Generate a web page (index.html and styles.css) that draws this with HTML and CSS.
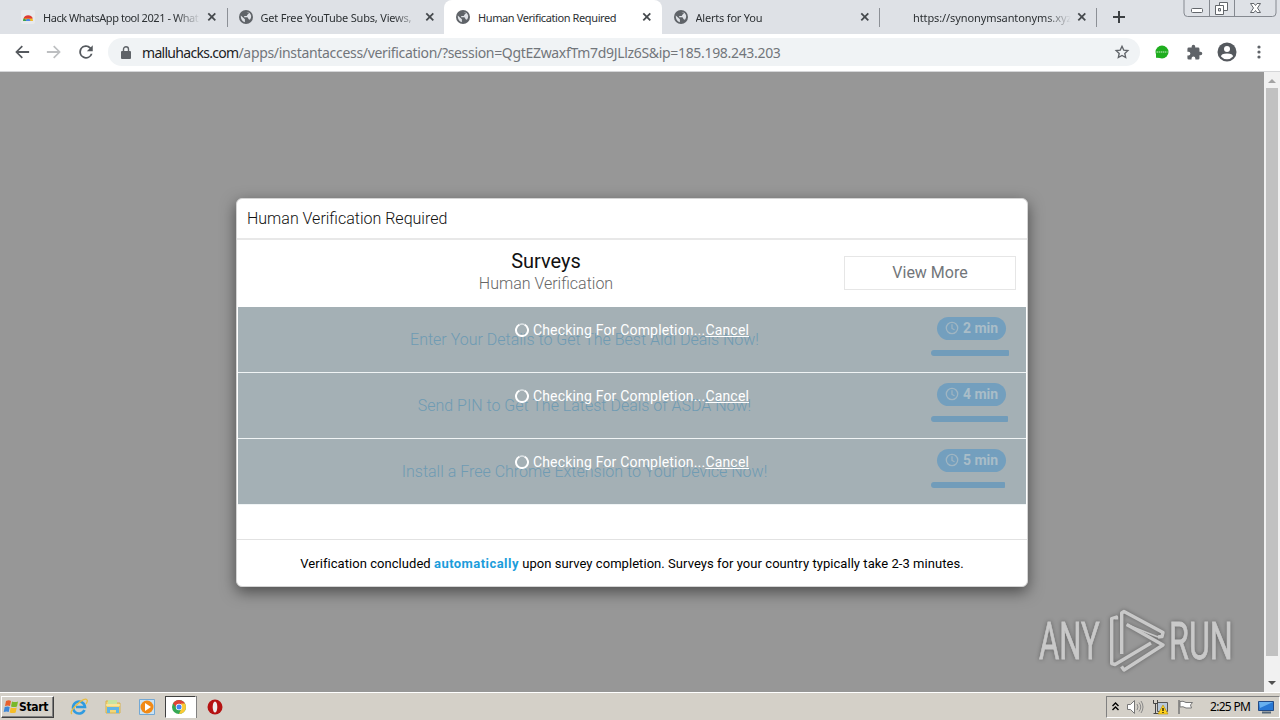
FILE: index.html
```html
<!DOCTYPE html>
<html lang="en">
<head>
    <meta charset="UTF-8">
    <meta name="viewport" content="width=device-width, initial-scale=1.0">
    <title>Human Verification Required</title>
    <link rel="stylesheet" href="styles.css">
</head>
<body>
    <svg class="defs" width="0" height="0">
        <symbol id="globe" viewBox="0 0 14 14">
            <circle cx="7" cy="7" r="7" fill="#5f6368"/>
            <path d="M1.8 5.6l3 2.6 1.1 1.1v2.9c-2.4-.5-4.3-2.9-4.1-6.6zM6 2.1c2 0 3.2.1 4.1.9L8.6 4.6 7.7 6H5.2v1.3h3.3l1.2 1.9 1.2.5c1-1 1.4-2.6 1.2-4.2-.6-1.8-1.7-3-3.2-3.6z" fill="#dee1e6"/>
        </symbol>
        <symbol id="close" viewBox="0 0 10 10">
            <path d="M1.300 1.300l7 7M8.300 1.300l-7 7" stroke="#45494d" stroke-width="1.800" fill="none"/>
        </symbol>
        <symbol id="clock" viewBox="0 0 14 14">
            <circle cx="7" cy="7" r="5.700" fill="none" stroke="#9fb5c2" stroke-width="1.300"/>
            <path d="M7 3.300V7.500l2.500 1.300" fill="none" stroke="#9fb5c2" stroke-width="1.200"/>
        </symbol>
        <symbol id="spinner" viewBox="0 0 14 14">
            <path d="M4.500 1.600A6 6 0 1 0 9.500 1.600" fill="none" stroke="#fff" stroke-width="2"/>
            <path d="M4.500 1.600A6 6 0 0 1 9.500 1.600" fill="none" stroke="#dbe1e4" stroke-width="1.500"/>
        </symbol>
    </svg>

    <div class="tab-strip">
        <div class="tab">
            <svg class="favicon" viewBox="0 0 14 14">
                <rect width="14" height="14" rx="2" fill="#e8e9ec"/>
                <path d="M2 11a5 5 0 0 1 10 0z" fill="#f2bc25"/>
                <path d="M2 11a5 5 0 0 1 1-3l3 3z" fill="#35a34f"/>
                <path d="M2.500 8.500a5 5 0 0 1 9.300 0z" fill="#df3b32"/>
                <path d="M4.800 11a2.300 2.300 0 0 1 4.600 0z" fill="#4a83e8"/>
            </svg>
            <span class="tab-title t1">Hack WhatsApp tool 2021 - What</span>
            <svg class="tab-close"><use href="#close"/></svg>
        </div>
        <div class="tab divided">
            <svg class="favicon"><use href="#globe"/></svg>
            <span class="tab-title">Get Free YouTube Subs, Views,</span>
            <svg class="tab-close"><use href="#close"/></svg>
        </div>
        <div class="tab active">
            <svg class="favicon"><use href="#globe"/></svg>
            <span class="tab-title t3">Human Verification Required</span>
            <svg class="tab-close"><use href="#close"/></svg>
        </div>
        <div class="tab">
            <svg class="favicon"><use href="#globe"/></svg>
            <span class="tab-title">Alerts for You</span>
            <svg class="tab-close"><use href="#close"/></svg>
        </div>
        <div class="tab divided last">
            <span class="favicon"></span>
            <span class="tab-title t5">https://synonymsantonyms.xyz</span>
            <svg class="tab-close"><use href="#close"/></svg>
        </div>
        <svg class="new-tab" viewBox="0 0 12 12"><path d="M6 0v12M0 6h12" stroke="#3c4043" stroke-width="2"/></svg>
        <svg class="window-buttons" viewBox="0 0 94 17">
            <path d="M1 0v13q0 3.500 3.500 3.500h85q3.500 0 3.500-3.500V0M26.500 0v16M51.500 0v16" fill="none" stroke="#858990"/>
            <rect x="8.500" y="8.500" width="11" height="4" rx="1" fill="#fff" stroke="#63676c"/>
            <path d="M36.500 2.500h8v8h-8z" fill="#fff" stroke="#63676c"/>
            <path d="M32.500 5.500h8v9h-8z" fill="#fff" stroke="#63676c"/>
            <path d="M35.500 8.500h2v2.500h-2z" fill="#dee1e6" stroke="#63676c"/>
            <path d="M67.500 3.500h3.500l1.500 2 1.500-2h3.500l-3 4.500 3 4.500H74l-1.500-2-1.500 2h-3.500l3-4.500z" fill="#fff" stroke="#63676c"/>
        </svg>
    </div>

    <div class="toolbar">
        <svg class="nav-icon" viewBox="0 0 24 24"><path d="M21.500 10.800H7.300l5.900-5.900L11.600 3.300 3 12l8.600 8.700 1.600-1.600-5.900-5.900h14.200z" fill="#55595e"/></svg>
        <svg class="nav-icon" viewBox="0 0 24 24"><path d="M2.500 10.800h14.200l-5.900-5.900 1.600-1.600L21 12l-8.600 8.700-1.600-1.600 5.900-5.900H2.500z" fill="#bdbfc1"/></svg>
        <svg class="nav-icon" viewBox="0 0 24 24"><path d="M18.400 5.600A9 9 0 1 0 20.700 14.300h-2.500A6.600 6.600 0 1 1 12 5.400c1.800 0 3.500.8 4.700 2L13.100 11H21V3z" fill="#55595e"/></svg>
        <div class="address-bar">
            <svg class="lock" viewBox="0 0 10 13"><path d="M1 5h8q1 0 1 1v6q0 1-1 1H1q-1 0-1-1V6q0-1 1-1z" fill="#5f6368"/><path d="M2.500 6V3.200a2.500 2.500 0 0 1 5 0V6" fill="none" stroke="#5f6368" stroke-width="1.400"/></svg>
            <span class="url"><span class="host">malluhacks.com</span><span class="path">/apps/instantaccess/verification/?session=QgtEZwaxfTm7d9JLlz6S&amp;ip=185.198.243.203</span></span>
            <svg class="star" viewBox="0 0 24 24"><path d="M12 3.500l2.600 5.700 6.200.7-4.600 4.200 1.300 6.200L12 17.200l-5.500 3.100 1.300-6.200-4.600-4.200 6.200-.7z" fill="none" stroke="#5f6368" stroke-width="2"/></svg>
        </div>
        <div class="extensions">
            <svg width="14" height="14" viewBox="0 0 14 14"><circle cx="7" cy="7" r="6.500" fill="#1fae1f"/><path d="M1 12.800V8l5 5z" fill="#1fae1f"/><path d="M1.500 7h11" stroke="#8fd88f" stroke-width="1.500" stroke-dasharray="1.500 .6"/></svg>
            <svg class="puzzle" width="17" height="17" viewBox="0 0 24 24"><path d="M20.500 11H19V7a2 2 0 0 0-2-2h-4V3.500a2.500 2.500 0 0 0-5 0V5H4a2 2 0 0 0-2 2v3.800h1.500a2.700 2.700 0 0 1 0 5.400H2V20a2 2 0 0 0 2 2h3.800v-1.500a2.700 2.700 0 0 1 5.400 0V22H17a2 2 0 0 0 2-2v-4h1.500a2.500 2.500 0 0 0 0-5z" fill="#5f6368"/></svg>
            <svg class="avatar" width="20" height="20" viewBox="0 0 20 20"><circle cx="10" cy="10" r="9.500" fill="#55595e"/><circle cx="10" cy="7" r="3" fill="#fff"/><path d="M4 14.500q0-3 6-3t6 3q-2.300 2.700-6 2.700t-6-2.700z" fill="#fff"/></svg>
            <svg width="4" height="14" viewBox="0 0 4 14" fill="#5f6368"><circle cx="2" cy="2" r="1.600"/><circle cx="2" cy="7" r="1.600"/><circle cx="2" cy="12" r="1.600"/></svg>
        </div>
    </div>

    <div class="viewport">
        <div class="page">
            <div class="modal">
                <div class="modal-title"><span>Human Verification Required</span></div>
                <div class="modal-head">
                    <div class="head-text">
                        <h1>Surveys</h1>
                        <p>Human Verification</p>
                    </div>
                    <button class="view-more">View More</button>
                </div>
                <div class="offer">
                    <div class="offer-name">Enter Your Details to Get The Best Aldi Deals Now!</div>
                    <div class="offer-side">
                        <div class="time"><svg><use href="#clock"/></svg>2 min</div>
                        <div class="bar" style="width: 78px"></div>
                    </div>
                    <div class="checking"><svg><use href="#spinner"/></svg><span>Checking For Completion...<a>Cancel</a></span></div>
                </div>
                <div class="offer">
                    <div class="offer-name">Send PIN to Get The Latest Deals of ASDA Now!</div>
                    <div class="offer-side">
                        <div class="time"><svg><use href="#clock"/></svg>4 min</div>
                        <div class="bar" style="width: 77px"></div>
                    </div>
                    <div class="checking"><svg><use href="#spinner"/></svg><span>Checking For Completion...<a>Cancel</a></span></div>
                </div>
                <div class="offer">
                    <div class="offer-name">Install a Free Chrome Extension to Your Device Now!</div>
                    <div class="offer-side">
                        <div class="time"><svg><use href="#clock"/></svg>5 min</div>
                        <div class="bar" style="width: 74px"></div>
                    </div>
                    <div class="checking"><svg><use href="#spinner"/></svg><span>Checking For Completion...<a>Cancel</a></span></div>
                </div>
                <div class="modal-foot"><p>Verification concluded <b>automatically</b> upon survey completion. Surveys for your country typically take 2-3 minutes.</p></div>
            </div>
            <svg class="watermark" viewBox="0 0 200 68">
                <g class="mark-text">
                    <text transform="translate(4 51) scale(.62 1)" textLength="98" lengthAdjust="spacingAndGlyphs">ANY</text>
                    <text transform="translate(134 51) scale(.62 1)" textLength="103" lengthAdjust="spacingAndGlyphs">RUN</text>
                </g>
                <g fill="none" stroke="#c9c9c9" stroke-width="3.400" stroke-linejoin="round">
                    <path d="M81.500 11.500V9l-4.800 1.500V55.500l3.300 1L116 35"/>
                    <path d="M123 29l4-.5 1-4L89 3.500l-2.300 1.500v41"/>
                    <path d="M91.700 16.500L128 37 89 62l-2.500-3.500"/>
                    <path d="M91.700 16.500L123 29" stroke-width="1.500"/>
                </g>
            </svg>
        </div>
        <div class="scrollbar">
            <svg viewBox="0 0 8 4"><path d="M0 4l4-4 4 4z" fill="#a3a3a3"/></svg>
            <div class="thumb"></div>
            <svg viewBox="0 0 8 4"><path d="M0 0l4 4 4-4z" fill="#505050"/></svg>
        </div>
    </div>

    <div class="taskbar">
        <div class="start">
            <svg width="16" height="16" viewBox="0 0 16 16"><path d="M3 2q3-1.500 5 0L7 7Q5 6 2 7z" fill="#e8602c"/><path d="M9 2.500q3 1.200 6 0L14 7.500q-3 1.200-6 0z" fill="#79b82a"/><path d="M1.700 8q3-1.200 5 0l-1 5q-2-1.200-5 0z" fill="#3d87d8"/><path d="M7.700 8.500q3 1.200 6 0l-1 5q-3 1.200-6 0z" fill="#f6bd27"/></svg>
            <span>Start</span>
        </div>
        <div class="launchers">
            <svg width="18" height="18" viewBox="0 0 18 18"><path d="M14.500 12A6 6 0 1 1 15 9H6" fill="none" stroke="#2f9be0" stroke-width="2.600"/><path d="M2 16Q-1 14 7 6.500T17 2q1 1-1 4" fill="none" stroke="#e8bd42" stroke-width="1.300"/></svg>
            <svg width="18" height="18" viewBox="0 0 18 18"><path d="M2 3h5l1 2h8v10H2z" fill="#f2d677" stroke="#d6b24e"/><path d="M4 2h9v4H4z" fill="#c6e4a2"/><path d="M3 15V9h12v6h-3v-3H6v3z" fill="#60b5e6"/><path d="M2 7h14" stroke="#fff5bd"/></svg>
            <svg width="18" height="18" viewBox="0 0 18 18"><path d="M1.500 1.500h15v15h-15z" fill="#cae3f5" stroke="#73a8d4"/><circle cx="9" cy="9" r="6.500" fill="#f18a16"/><path d="M7 5l6 4-6 4z" fill="#fff"/></svg>
            <div class="running">
                <svg width="14" height="14" viewBox="0 0 14 14"><circle cx="7" cy="7" r="7" fill="#35a853"/><path d="M1 3.500a7 7 0 0 1 12 0L9 7H4z" fill="#df4336"/><path d="M13 3.500A7 7 0 0 1 7 14l3-7-1-3.500z" fill="#fcc934"/><circle cx="7" cy="7" r="3.200" fill="#fff"/><circle cx="7" cy="7" r="2.500" fill="#4285f4"/></svg>
            </div>
            <svg class="opera" width="16" height="16" viewBox="0 0 16 16"><circle cx="8" cy="8" r="7.500" fill="#b51212"/><ellipse cx="8" cy="8" rx="2.300" ry="5.500" fill="#eee"/></svg>
        </div>
        <div class="tray">
            <svg width="7" height="9" viewBox="0 0 7 9"><path d="M.5 4l3-3 3 3M.5 8l3-3 3 3" fill="none" stroke="#000" stroke-width="1.400"/></svg>
            <svg width="17" height="16" viewBox="0 0 17 16"><path d="M.5 5.500h3l4-4v13l-4-4h-3z" fill="#fff" stroke="#777"/><path d="M10 5q2 3 0 6M12 3.500q3.500 4.500 0 9M14 2q4 6 0 12" fill="none" stroke="#888"/></svg>
            <svg width="17" height="16" viewBox="0 0 17 16"><path d="M5.500 3.500h10v9h-10z" fill="#b8c8da" stroke="#555"/><path d="M1.500 1v3.500h4V1M3.500 4v11M1.500 14.500h7" fill="none" stroke="#444"/><path d="M11 6l5 9H6z" fill="#ffd21c" stroke="#b28a00" stroke-width=".6"/><path d="M11 9v3m0 1v1" stroke="#000" stroke-width="1.200"/></svg>
            <svg width="17" height="16" viewBox="0 0 17 16"><path d="M2 1v14" stroke="#777" stroke-width="1.500"/><path d="M3 2.500q3-1 6 1h6.500l-2 2.500 1 3H9q-3-2-6-1z" fill="#fff" stroke="#777"/></svg>
            <span class="time-now">2:25 PM</span>
            <svg width="16" height="14" viewBox="0 0 16 14"><path d="M.5 1.500h15v9H.5z" fill="#2878d4" stroke="#234a84"/><path d="M1 2h14L2 8z" fill="#68b1ef"/><path d="M4 12.500h9" stroke="#567" stroke-width="2"/></svg>
        </div>
    </div>
</body>
</html>
```

FILE: styles.css
```css
* { margin: 0; padding: 0; box-sizing: border-box; }
body {
    width: 1280px;
    height: 720px;
    overflow: hidden;
    display: flex;
    flex-direction: column;
    font-family: Roboto, "Liberation Sans", sans-serif;
    background: #d4d0c8;
}
svg { display: block; flex: none; }
.defs { position: absolute; }

/* browser tabs */
.tab-strip {
    position: relative;
    height: 34px;
    flex: none;
    display: flex;
    align-items: center;
    padding-left: 9px;
    background: #dee1e6;
    font: 11px "Noto Sans", sans-serif;
    letter-spacing: -0.2px;
    color: #2c3033;
}
.tab {
    width: 217.5px;
    height: 34px;
    flex: none;
    display: flex;
    align-items: center;
    padding-left: 12px;
}
.divided {
    background: linear-gradient(#8c9096, #8c9096) 0 8px / 1px 19px no-repeat;
}
.last {
    background: linear-gradient(#8c9096, #8c9096) 0 8px / 1px 19px no-repeat,
                linear-gradient(#8c9096, #8c9096) 100% 8px / 1px 19px no-repeat;
}
.active {
    background: #fff;
    border-radius: 8px 8px 0 0;
}
.favicon { width: 14px; height: 14px; flex: none; }
.tab-title {
    width: 160px;
    margin-left: 8px;
    white-space: nowrap;
    -webkit-mask-image: linear-gradient(90deg, #000 132px, transparent 158px);
    mask-image: linear-gradient(90deg, #000 132px, transparent 158px);
}
.active .tab-title { -webkit-mask-image: none; mask-image: none; }
.t1 { letter-spacing: -0.45px; }
.t3 { letter-spacing: -0.4px; }
.t5 { letter-spacing: -0.1px; }
.tab-close { width: 10px; height: 10px; margin-left: 4px; }
.new-tab { width: 12px; height: 12px; margin-left: 16px; }
.window-buttons {
    position: absolute;
    top: 0;
    right: 3px;
    width: 94px;
    height: 17px;
}

/* toolbar */
.toolbar {
    height: 38px;
    flex: none;
    display: flex;
    align-items: center;
    padding: 0 0 1px 13px;
    background: #fff;
    border-bottom: 1px solid #d5d6d8;
}
.nav-icon { width: 18px; height: 18px; margin-right: 14px; }
.address-bar {
    width: 1032px;
    height: 28px;
    display: flex;
    align-items: center;
    padding: 0 10px 0 13px;
    border-radius: 14px;
    background: #f0f3f5;
    margin-left: -1px;
}
.lock { width: 10px; height: 13px; margin-right: 11px; }
.url {
    flex: 1;
    font: 14px "Noto Sans", sans-serif;
    white-space: nowrap;
}
.host { color: #202124; letter-spacing: -0.7px; }
.path { color: #72767b; letter-spacing: -0.32px; }
.star { width: 16px; height: 16px; }
.extensions {
    flex: 1;
    display: flex;
    align-items: center;
    padding-left: 15px;
}
.puzzle { margin-left: 17px; }
.avatar { margin: 0 20px 0 14px; }

/* page */
.viewport { height: 620px; flex: none; display: flex; }
.page {
    position: relative;
    flex: 1;
    display: flex;
    justify-content: center;
    align-items: flex-start;
    padding-top: 126px;
    background: #979797;
    overflow: hidden;
}
.scrollbar {
    width: 16px;
    display: flex;
    flex-direction: column;
    align-items: center;
    padding: 7px 0;
    background: #f1f1f1;
}
.scrollbar svg { width: 8px; height: 4px; }
.thumb {
    width: 12px;
    height: 568px;
    margin: 5px 0 auto;
    background: #c1c1c1;
}
.modal {
    width: 792px;
    height: 389px;
    display: flex;
    flex-direction: column;
    border: 1px solid #d4d4d4;
    border-radius: 6px;
    background: #fff;
    box-shadow: 0 5px 15px rgba(0,0,0,0.5);
}
.modal-title {
    height: 41px;
    flex: none;
    padding: 10px;
    line-height: 20px;
    font-size: 16px;
    font-weight: 300;
    color: #111;
    border-bottom: 2px solid #e8e8e8;
}
.modal-head {
    height: 67px;
    flex: none;
    display: flex;
    align-items: center;
    padding: 0 11px 2px;
}
.head-text { flex: 1; text-align: center; padding-bottom: 2px; }
.head-text h1 { font-size: 20px; line-height: 23px; font-weight: 400; color: #111; }
.head-text p { font-size: 16px; line-height: 21px; font-weight: 300; color: #666; }
.view-more {
    width: 172px;
    height: 34px;
    border: 1px solid #e6e6e6;
    background: #fff;
    font: 16px Roboto, sans-serif;
    color: #72767a;
}
.offer {
    position: relative;
    height: 66px;
    flex: none;
    display: flex;
    margin: 0 1px;
    background: #a4b0b5;
    border-bottom: 1px solid #f0f4f5;
}
.offer-name {
    width: 693px;
    text-align: center;
    line-height: 66px;
    font-size: 16px;
    font-weight: 300;
    color: #6f9bb3;
    white-space: nowrap;
}
.offer-side { width: 79px; padding-top: 10px; }
.time {
    width: 69px;
    height: 23px;
    display: flex;
    align-items: center;
    justify-content: center;
    gap: 4px;
    margin: 0 0 10px 6px;
    padding-bottom: 1px;
    border-radius: 12px;
    background: #739fbe;
    color: #a9bdc8;
    font-size: 14px;
    font-weight: 700;
}
.time svg { width: 14px; height: 14px; }
.bar { height: 6px; border-radius: 3px 1px 1px 3px; background: #719cba; }
.checking {
    position: absolute;
    top: 13px;
    left: 0;
    right: 0;
    display: flex;
    justify-content: center;
    align-items: center;
    gap: 4px;
    font-size: 14px;
    line-height: 20px;
    letter-spacing: 0.18px;
    color: #fff;
}
.checking svg { width: 14px; height: 14px; }
.checking a { text-decoration: underline; }
.modal-foot {
    margin-top: auto;
    height: 47px;
    text-align: center;
    line-height: 48px;
    font-size: 13px;
    letter-spacing: 0.05px;
    color: #000;
    border-top: 1px solid #e2e2e2;
    white-space: nowrap;
}
.modal-foot b { color: #1b9ddb; letter-spacing: 0.45px; }
.watermark {
    position: absolute;
    left: 1035px;
    top: 536px;
    width: 200px;
    height: 68px;
    filter: drop-shadow(0 0 2px rgba(0,0,0,0.35));
}
.mark-text {
    font: 51px Roboto, sans-serif;
    fill: #c9c9c9;
    stroke: #c9c9c9;
    stroke-width: 0.8px;
}

/* taskbar */
.taskbar {
    height: 28px;
    flex: none;
    display: flex;
    align-items: center;
    border-top: 1px solid #fff;
    background: #d4d0c8;
}
.start {
    width: 53px;
    height: 22px;
    display: flex;
    align-items: center;
    margin-left: 1px;
    padding-left: 1px;
    border: 1px solid;
    border-color: #fff #404040 #404040 #fff;
    box-shadow: inset -1px -1px #808080;
    font: bold 12px "DejaVu Sans Condensed", "DejaVu Sans", sans-serif;
    color: #000;
    letter-spacing: -0.3px;
}
.launchers { display: flex; align-items: center; gap: 16px; margin-left: 16px; }
.running {
    width: 31px;
    height: 22px;
    display: flex;
    align-items: center;
    padding-left: 6px;
    border: 1px solid;
    border-color: #404040 #fff #fff #404040;
    background: #fff;
    margin-left: -7px;
    box-shadow: 1px 0 #808080;
}
.opera { margin-left: -5px; }
.tray {
    width: 174px;
    height: 22px;
    display: flex;
    align-items: center;
    margin-left: auto;
    padding-left: 5px;
    border: 1px solid;
    border-color: #808080 #fff #fff #808080;
}
.tray svg { margin-right: 8px; }
.time-now {
    width: 43px;
    margin: 0 8px 0 8px;
    font: 12px "Noto Sans", sans-serif;
    letter-spacing: -0.7px;
    white-space: nowrap;
}
```
